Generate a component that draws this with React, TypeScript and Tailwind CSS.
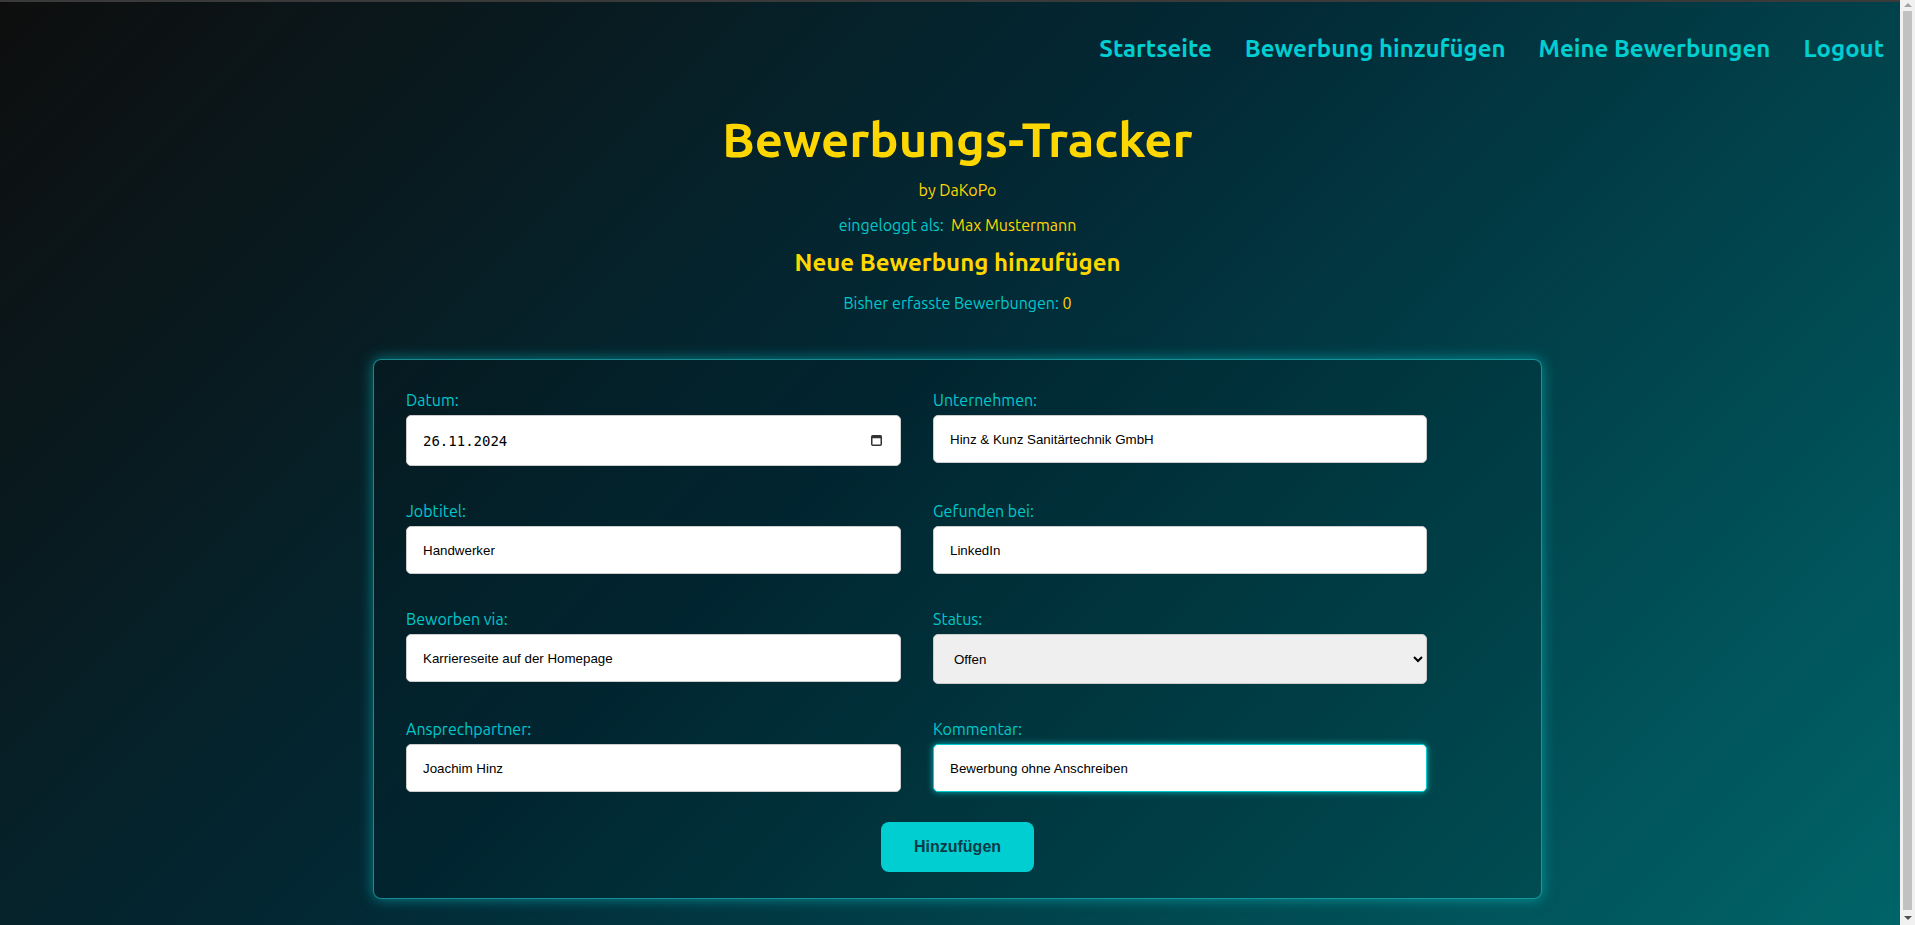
import { useEffect, useRef, useState } from 'react'

const navLinks = ['Startseite', 'Bewerbung hinzufügen', 'Meine Bewerbungen', 'Logout']

const statusOptions = ['Offen', 'Eingeladen', 'Abgelehnt', 'Zusage']

const labelClass = 'block text-[16px] leading-[20px] text-[#00c8cc] mb-[5px]'
const inputClass =
  "w-full h-12 px-4 bg-white border border-[#cccccc] rounded-[5px] text-[13.33px] text-black font-['Liberation_Sans',Arial,sans-serif] focus:outline-none"

function Field({ label, children }: { label: string; children: React.ReactNode }) {
  return (
    <div>
      <label className={labelClass}>{label}</label>
      {children}
    </div>
  )
}

export default function App() {
  const [form, setForm] = useState({
    datum: '26.11.2024',
    unternehmen: 'Hinz & Kunz Sanitärtechnik GmbH',
    jobtitel: 'Handwerker',
    gefunden: 'LinkedIn',
    via: 'Karriereseite auf der Homepage',
    status: 'Offen',
    ansprechpartner: 'Joachim Hinz',
    kommentar: 'Bewerbung ohne Anschreiben',
  })
  const commentRef = useRef<HTMLInputElement>(null)

  useEffect(() => {
    const el = commentRef.current
    if (el) {
      el.focus({ preventScroll: true })
      el.setSelectionRange(el.value.length, el.value.length)
    }
  }, [])

  function update(key: keyof typeof form, value: string) {
    setForm((f) => ({ ...f, [key]: value }))
  }

  return (
    <div className="min-h-[960px] border-t-2 border-[#3a3a3a] bg-[linear-gradient(135deg,#0e0e0e_0%,#022a36_45%,#00666a_100%)] font-['Ubuntu','Lato','Noto_Sans',sans-serif] pb-[60px]">
      {/* Nav */}
      <nav className="flex justify-end gap-[33px] pt-[31px] pr-[31px]">
        {navLinks.map((link) => (
          <a key={link} href="#" className="text-[24px] leading-[32px] font-bold text-[#00ced1] no-underline">
            {link}
          </a>
        ))}
      </nav>

      <main className="flex flex-col items-center">
        <h1 className="mt-[46px] text-[49px] leading-[56px] font-bold text-[#ffd700]">Bewerbungs-Tracker</h1>
        <p className="mt-[11px] text-[16px] leading-[24px] text-[#ffd700]">by DaKoPo</p>
        <p className="mt-[11px] text-[16px] leading-[24px] text-[#00c8cc]">
          eingeloggt als:&nbsp; <span className="text-[#ffd700]">Max Mustermann</span>
        </p>
        <h2 className="mt-[10px] text-[24px] leading-[32px] font-bold text-[#ffd700]">Neue Bewerbung hinzufügen</h2>
        <p className="mt-[12px] text-[16px] leading-[24px] text-[#00c8cc]">
          Bisher erfasste Bewerbungen: <span className="text-[#ffd700]">0</span>
        </p>

        {/* Form card */}
        <form
          className="mt-[44px] w-[1169px] rounded-[8px] border border-[#1fb9bd]/70 bg-black/10 shadow-[0_0_14px_rgba(0,206,209,0.55)] px-8 pt-[30px] pb-[26px] flex flex-col"
          onSubmit={(e) => e.preventDefault()}
        >
          <div className="grid grid-cols-[495px_494px] gap-x-8 gap-y-[35px]">
            <Field label="Datum:">
              <div className="relative">
                <input
                  type="text"
                  value={form.datum}
                  onChange={(e) => update('datum', e.target.value)}
                  className="w-full h-[51px] pl-4 pr-10 bg-white border border-[#cccccc] rounded-[5px] text-[14px] font-['DejaVu_Sans_Mono',monospace] text-black focus:outline-none"
                />
                <svg
                  className="absolute right-[19px] top-[19px] w-[11px] h-[12px] text-[#333]"
                  viewBox="0 0 11 12"
                  fill="none"
                >
                  <rect x="0.75" y="1.75" width="9.5" height="9.5" rx="1" stroke="currentColor" strokeWidth="1.5" />
                  <rect x="0.75" y="1.75" width="9.5" height="2.5" fill="currentColor" />
                </svg>
              </div>
            </Field>
            <Field label="Unternehmen:">
              <input
                type="text"
                value={form.unternehmen}
                onChange={(e) => update('unternehmen', e.target.value)}
                className={inputClass}
              />
            </Field>
            <Field label="Jobtitel:">
              <input
                type="text"
                value={form.jobtitel}
                onChange={(e) => update('jobtitel', e.target.value)}
                className={inputClass}
              />
            </Field>
            <Field label="Gefunden bei:">
              <input
                type="text"
                value={form.gefunden}
                onChange={(e) => update('gefunden', e.target.value)}
                className={inputClass}
              />
            </Field>
            <Field label="Beworben via:">
              <input
                type="text"
                value={form.via}
                onChange={(e) => update('via', e.target.value)}
                className={inputClass}
              />
            </Field>
            <Field label="Status:">
              <select
                value={form.status}
                onChange={(e) => update('status', e.target.value)}
                className="w-full h-[50px] px-4 bg-[#efefef] border border-[#cccccc] rounded-[5px] text-[13.33px] text-black font-['Liberation_Sans',Arial,sans-serif] focus:outline-none"
              >
                {statusOptions.map((s) => (
                  <option key={s} value={s}>
                    {s}
                  </option>
                ))}
              </select>
            </Field>
            <Field label="Ansprechpartner:">
              <input
                type="text"
                value={form.ansprechpartner}
                onChange={(e) => update('ansprechpartner', e.target.value)}
                className={inputClass}
              />
            </Field>
            <Field label="Kommentar:">
              <input
                ref={commentRef}
                type="text"
                value={form.kommentar}
                onChange={(e) => update('kommentar', e.target.value)}
                className="w-full h-12 px-4 bg-white border border-[#00ced1] rounded-[5px] text-[13.33px] text-black font-['Liberation_Sans',Arial,sans-serif] shadow-[0_0_6px_rgba(0,206,209,0.8)] focus:outline-none"
              />
            </Field>
          </div>

          <button
            type="submit"
            className="mt-[30px] self-center w-[153px] h-[50px] rounded-[8px] bg-[#00ced1] text-[16px] font-bold text-[#0b3b48] font-['Liberation_Sans',Arial,sans-serif]"
          >
            Hinzufügen
          </button>
        </form>
      </main>

      {/* Scrollbar as in the screenshot */}
      <div className="fixed right-0 top-0 w-[15px] h-[925px] bg-[#f1f1f1] flex flex-col items-center">
        <div className="h-[10px] w-full flex items-center justify-center">
          <div className="w-0 h-0 border-l-[4px] border-r-[4px] border-b-[4px] border-l-transparent border-r-transparent border-b-[#a3a3a3]" />
        </div>
        <div className="w-[9px] flex-1 bg-[#c1c1c1] my-[1px]" />
        <div className="h-[14px] w-full flex items-center justify-center">
          <div className="w-0 h-0 border-l-[4px] border-r-[4px] border-t-[4px] border-l-transparent border-r-transparent border-t-[#505050]" />
        </div>
      </div>
    </div>
  )
}
